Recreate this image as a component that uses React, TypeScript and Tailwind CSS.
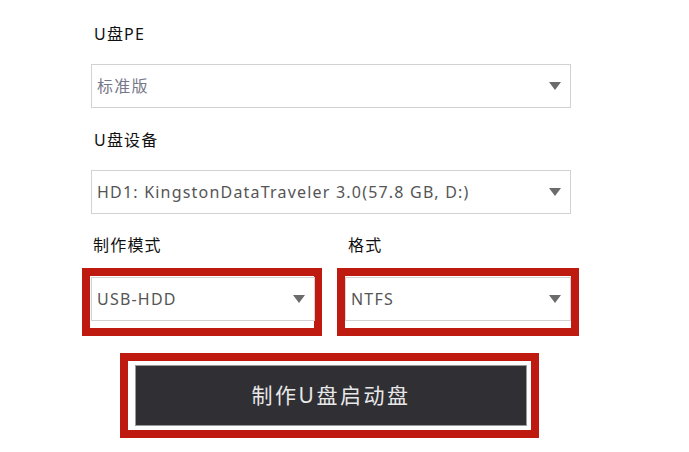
const font = { fontFamily: '"Noto Sans", "Noto Sans CJK SC", sans-serif' };

const Arrow = () => (
  <svg width="12" height="8" viewBox="0 0 12 8" className="shrink-0">
    <path d="M0 0 L12 0 L6 8 Z" fill="#6b6b6b" />
  </svg>
);

const Select = ({ value, width, muted }: { value: string; width: string; muted?: boolean }) => (
  <div
    className={`${width} h-[44px] border border-[#d2d2d2] bg-white flex items-center justify-between pl-[5px] pr-[9px]`}
  >
    <span className={`text-[16px] tracking-[1.2px] ${muted ? "text-[#77778a]" : "text-[#555]"}`}>{value}</span>
    <Arrow />
  </div>
);

export default function App() {
  return (
    <div className="w-[689px] h-[452px] bg-white pl-[91px] pt-[24px] overflow-hidden" style={font}>
      <div className="w-[480px]">
        <div className="h-[20px] leading-[20px] text-[16px] text-[#111] tracking-[1.2px] pl-[3px]">U盘PE</div>
        <div className="mt-[20px]">
          <Select value="标准版" width="w-[480px]" muted />
        </div>

        <div className="mt-[22px] h-[20px] leading-[20px] text-[16px] text-[#111] tracking-[1.2px] pl-[3px]">
          U盘设备
        </div>
        <div className="mt-[20px]">
          <Select value="HD1: KingstonDataTraveler 3.0(57.8 GB, D:)" width="w-[480px]" />
        </div>

        <div className="mt-[21px] h-[20px] leading-[20px] text-[16px] text-[#111] tracking-[1.2px] flex">
          <span className="w-[257px] pl-[2px]">制作模式</span>
          <span>格式</span>
        </div>

        {/* highlighted selects */}
        <div className="mt-[13px] -ml-[9px] flex gap-[15px]">
          <div className="w-[240px] h-[68px] border-[8px] border-[#bf1a10] pl-[1px] pt-[1px]">
            <Select value="USB-HDD" width="w-[224px]" />
          </div>
          <div className="w-[251px] h-[68px] border-[8px] border-[#bf1a10] pt-[1px]">
            <Select value="NTFS" width="w-[226px]" />
          </div>
        </div>

        <div className="mt-[17px] ml-[29px] w-[419px] h-[85px] border-[8px] border-[#bf1a10] pl-[7px] pt-[4px]">
          <button className="w-[392px] h-[61px] bg-[#2f2f34] border border-[#9a9a9a] text-[#e8e8e8] text-[21px] tracking-[2.5px] flex items-center justify-center">
            制作U盘启动盘
          </button>
        </div>
      </div>
    </div>
  );
}
